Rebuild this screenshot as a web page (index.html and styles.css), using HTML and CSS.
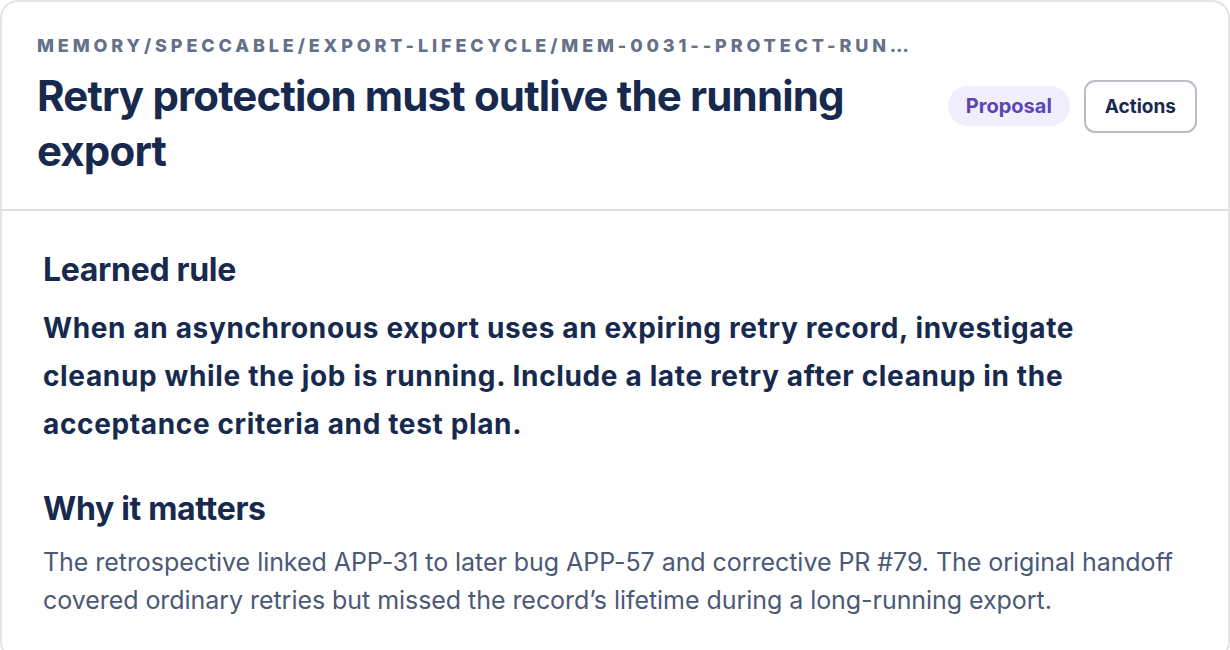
FILE: index.html
```html
<!DOCTYPE html>
<html lang="en">
<head>
<meta charset="utf-8">
<title>Memory proposal</title>
<link rel="stylesheet" href="styles.css">
</head>
<body>
<article class="card">
  <header class="card-header">
    <div class="header-main">
      <div class="breadcrumb">memory/speccable/export-lifecycle/mem-0031--protect-running-export-retry-record</div>
      <h1 class="title">Retry protection must outlive the running export</h1>
    </div>
    <div class="header-side">
      <span class="pill">Proposal</span>
      <button class="btn" type="button">Actions</button>
    </div>
  </header>
  <section class="card-body">
    <h2 class="section-title">Learned rule</h2>
    <p class="rule">When an asynchronous export uses an expiring retry record, investigate cleanup while the job is running. Include a late retry after cleanup in the acceptance criteria and test plan.</p>
    <h2 class="section-title why">Why it matters</h2>
    <p class="desc">The retrospective linked APP-31 to later bug APP-57 and corrective PR #79. The original handoff covered ordinary retries but missed the record’s lifetime during a long-running export.</p>
  </section>
</article>
</body>
</html>
```

FILE: styles.css
```css
* { box-sizing: border-box; }
html { overflow: hidden; }
html, body { margin: 0; padding: 0; background: #ffffff; }
body {
  font-family: Inter, "Noto Sans", "Liberation Sans", sans-serif;
  color: #172a4e;
}
.card {
  width: 1230px;
  height: 660px;
  border: 2px solid #e2e5ea;
  border-radius: 18px;
  background: #fff;
}
.card-header {
  display: flex;
  align-items: center;
  gap: 36px;
  padding: 33px 31px 31px 35px;
  border-bottom: 2px solid #dde1e6;
}
.header-main {
  flex: 1;
  min-width: 0;
}
.breadcrumb {
  font-size: 18px;
  line-height: 22px;
  font-weight: 800;
  letter-spacing: 0.215em;
  text-transform: uppercase;
  color: #657089;
  white-space: nowrap;
  overflow: hidden;
  text-overflow: ellipsis;
}
.title {
  margin: 11px 0 0;
  font-size: 42px;
  line-height: 55px;
  font-weight: 700;
  letter-spacing: -0.02em;
  color: #172a4e;
}
.header-side {
  display: flex;
  align-items: center;
  gap: 14px;
  flex: none;
}
.pill {
  display: inline-flex;
  align-items: center;
  height: 40px;
  padding: 0 18px;
  border-radius: 20px;
  background: #f1effd;
  color: #5b45b3;
  font-size: 20px;
  font-weight: 700;
  margin-top: -2px;
}
.btn {
  height: 53px;
  padding: 0 19px;
  border: 2px solid #b8bdc7;
  border-radius: 11px;
  background: #fff;
  color: #172a4e;
  font-family: inherit;
  font-size: 19px;
  font-weight: 700;
}
.card-body {
  padding: 40px 40px 0 41px;
}
.section-title {
  margin: 0;
  font-size: 32px;
  line-height: 38px;
  font-weight: 700;
  letter-spacing: -0.01em;
  color: #172a4e;
}
.rule {
  margin: 15px 0 0;
  font-size: 28px;
  line-height: 48px;
  font-weight: 700;
  letter-spacing: 0.023em;
  color: #172a4e;
}
.section-title.why { margin-top: 42px; }
.desc {
  margin: 15px 0 0;
  font-size: 25px;
  line-height: 38px;
  font-weight: 400;
  letter-spacing: -0.002em;
  color: #4a5976;
}
```
